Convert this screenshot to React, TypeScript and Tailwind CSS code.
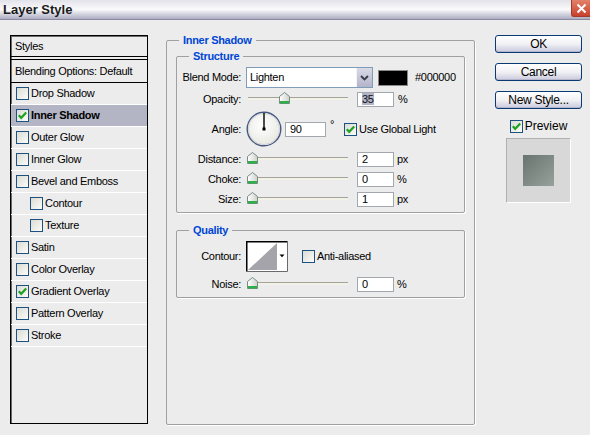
import React from "react";

type Item = { label: string; checked?: boolean; active?: boolean; sub?: boolean };

const items: Item[] = [
  { label: "Drop Shadow" },
  { label: "Inner Shadow", checked: true, active: true },
  { label: "Outer Glow" },
  { label: "Inner Glow" },
  { label: "Bevel and Emboss" },
  { label: "Contour", sub: true },
  { label: "Texture", sub: true },
  { label: "Satin" },
  { label: "Color Overlay" },
  { label: "Gradient Overlay", checked: true },
  { label: "Pattern Overlay" },
  { label: "Stroke" },
];

function Check({ checked = false }: { checked?: boolean }) {
  return (
    <span className="relative inline-block w-[13px] h-[13px] shrink-0 border border-[#1c5180] bg-gradient-to-br from-[#dcdcd5] to-[#fbfbf9]">
      {checked && (
        <svg className="absolute left-0 top-0" width="11" height="11" viewBox="0 0 11 11">
          <path d="M1.8 5.2 L4.2 7.8 L9.2 2.4" fill="none" stroke="#21a121" strokeWidth="2.2" />
        </svg>
      )}
    </span>
  );
}

function Thumb() {
  return (
    <svg width="11" height="12" viewBox="0 0 11 12">
      <defs>
        <linearGradient id="thumbFill" x1="0" y1="0" x2="1" y2="0">
          <stop offset="0" stopColor="#ffffff" />
          <stop offset="1" stopColor="#cdd2cc" />
        </linearGradient>
      </defs>
      <path d="M0.5 4.5 L5.5 0.5 L10.5 4.5 V11.5 H0.5 Z" fill="url(#thumbFill)" stroke="#7b8a82" />
      <rect x="1" y="9" width="9" height="2.5" fill="#2fae4c" />
    </svg>
  );
}

function Slider({ value }: { value: number }) {
  return (
    <div className="relative w-[106px] h-[14px] shrink-0">
      <div className="absolute left-[2px] w-[100px] top-[5px] h-[3px] border-t border-[#a3a398] bg-[#f3f2e8]" />
      <div className="absolute top-[0px]" style={{ left: 1 + value * 0.92 }}>
        <Thumb />
      </div>
    </div>
  );
}

function Field({ children, wide = false }: { children: React.ReactNode; wide?: boolean }) {
  return (
    <div
      className={
        (wide ? "w-[41px]" : "w-[37px]") +
        " h-[15px] shrink-0 border border-[#a3a8ae] bg-white flex items-center pl-[4px] leading-[12px]"
      }
    >
      {children}
    </div>
  );
}

function Label({ children }: { children: React.ReactNode }) {
  return <span className="w-[64px] shrink-0 text-right">{children}</span>;
}

function SliderRow({ label, value, unit }: { label: string; value: number; unit: string }) {
  return (
    <div className="flex items-center h-[20px]">
      <Label>{label}</Label>
      <div className="ml-[5px]">
        <Slider value={0} />
      </div>
      <div className="ml-[5px]">
        <Field>{value}</Field>
      </div>
      <span className="ml-[3px]">{unit}</span>
    </div>
  );
}

function AngleDial() {
  return (
    <svg width="36" height="36" viewBox="0 0 36 36">
      <defs>
        <radialGradient id="dialFill" cx="0.45" cy="0.4" r="0.65">
          <stop offset="0" stopColor="#ffffff" />
          <stop offset="1" stopColor="#e6e6df" />
        </radialGradient>
      </defs>
      <circle cx="18" cy="18" r="16.8" fill="url(#dialFill)" stroke="#45597f" strokeWidth="1.4" />
      <circle cx="18" cy="18" r="15.6" fill="none" stroke="#c9ccd4" strokeWidth="0.8" />
      <line x1="18" y1="18" x2="18" y2="2" stroke="#000" strokeWidth="1.4" />
      <rect x="16.5" y="16.5" width="3" height="3" fill="#000" />
    </svg>
  );
}

function ContourPicker() {
  return (
    <svg width="42" height="31" viewBox="0 0 42 31">
      <rect x="0" y="0" width="42" height="31" fill="#ffffff" />
      <path d="M2 29 L31 2 L31 29 Z" fill="#a4a4aa" />
      <path d="M0.75 30.25 V0.75 H41.25" fill="none" stroke="#000" strokeWidth="1.5" />
      <path d="M41.5 0 V30.5 H0" fill="none" stroke="#6a6a6a" strokeWidth="1" />
      <path d="M33.5 13.5 H38.5 L36 16.2 Z" fill="#000" />
    </svg>
  );
}

function Button({ children }: { children: React.ReactNode }) {
  return (
    <div className="w-[87px] h-[18px] rounded-[3px] border border-[#0a3a73] bg-gradient-to-b from-[#ffffff] via-[#f1f1f5] to-[#c9c9dd] shadow-[inset_0_-1px_0_#b5b5cc] flex items-center justify-center text-[12px] leading-none text-black">
      {children}
    </div>
  );
}

export default function App() {
  return (
    <div className="w-[590px] h-[435px] bg-[#ececec] text-black text-[11px] tracking-[-0.3px] font-['Tahoma','Liberation_Sans',Arial,sans-serif] overflow-hidden select-none">
      {/* title bar */}
      <div className="relative h-[20px] bg-gradient-to-b from-[#e2e2ea] via-[#fafafc] to-[#adadc3] border-b border-[#8a8aa2] flex items-center pl-[3px]">
        <span className="text-[13px] font-bold tracking-normal text-[#1b1b1b] leading-none">Layer Style</span>
        <div className="absolute right-0 top-0 w-[19px] h-[17px] rounded-bl-[3px] bg-gradient-to-b from-[#e2806a] to-[#c8402c] border-l border-b border-[#a33b2a] flex items-center justify-center">
          <svg width="11" height="11" viewBox="0 0 11 11">
            <path d="M1.5 1.5 L9.5 9.5 M9.5 1.5 L1.5 9.5" stroke="#fff" strokeWidth="2" />
          </svg>
        </div>
      </div>

      <div className="flex items-start pl-[10px] pt-[15px]">
        {/* styles list */}
        <div className="w-[138px] h-[389px] border border-black shadow-[inset_1px_1px_0_#6b6b6b] flex flex-col shrink-0">
          <div className="h-[21px] flex items-center pl-[4px] border-b border-black">Styles</div>
          <div className="h-[2px]" />
          <div className="h-[24px] flex items-center pl-[4px] border-t border-b border-black">
            Blending Options: Default
          </div>
          {items.map((it) => (
            <div
              key={it.label}
              className={
                "h-[22px] flex items-center gap-[2px] border-b border-white " +
                (it.sub ? "pl-[19px] " : "pl-[5px] ") +
                (it.active ? "bg-[#b3b4c4] font-bold" : "")
              }
            >
              <Check checked={it.checked} />
              <span>{it.label}</span>
            </div>
          ))}
        </div>

        {/* settings */}
        <fieldset className="ml-[18px] -mt-[2px] w-[309px] h-[392px] shrink-0 border border-[#a0a0a0] shadow-[1px_1px_0_#fff] px-[9px] rounded-[2px]">
          <legend className="ml-[3px] px-[4px] leading-[14px] font-bold text-[#0046d5]">Inner Shadow</legend>

          <fieldset className="mt-[2px] border border-[#a0a0a0] shadow-[1px_1px_0_#fff] pb-[3px] rounded-[2px]">
            <legend className="ml-[12px] px-[4px] leading-[14px] font-bold text-[#0046d5]">Structure</legend>

            <div className="flex items-center h-[21px] mt-[4px]">
              <Label>Blend Mode:</Label>
              <div className="ml-[5px] w-[127px] h-[21px] border border-[#7f9db9] bg-white flex items-center shrink-0">
                <span className="flex-1 pl-[3px]">Lighten</span>
                <div className="w-[16px] h-[19px] bg-gradient-to-b from-[#d9d9e6] to-[#b3b4cb] border-l border-[#f2f2f8] flex items-center justify-center">
                  <svg width="9" height="6" viewBox="0 0 9 6">
                    <path d="M1 1 L4.5 4.5 L8 1" fill="none" stroke="#3a3a48" strokeWidth="1.8" />
                  </svg>
                </div>
              </div>
              <div className="ml-[5px] w-[30px] h-[16px] bg-black border border-[#8a8a8a] shrink-0" />
              <span className="ml-[7px]">#000000</span>
            </div>

            <div className="flex items-center h-[16px] mt-[3px]">
              <Label>Opacity:</Label>
              <div className="ml-[5px]">
                <Slider value={35} />
              </div>
              <div className="ml-[5px]">
                <Field>
                  <span className="bg-[#b1b3c6] text-[#111]">35</span>
                </Field>
              </div>
              <span className="ml-[4px]">%</span>
            </div>

            <div className="flex items-center h-[36px] mt-[4px]">
              <Label>Angle:</Label>
              <div className="ml-[5px] shrink-0">
                <AngleDial />
              </div>
              <div className="ml-[3px]">
                <Field wide>90</Field>
              </div>
              <span className="ml-[4px] self-start mt-[8px] leading-none">°</span>
              <div className="ml-[10px] flex items-center gap-[2px]">
                <Check checked />
                <span>Use Global Light</span>
              </div>
            </div>

            <div className="mt-[2px]">
              <SliderRow label="Distance:" value={2} unit="px" />
              <SliderRow label="Choke:" value={0} unit="%" />
              <SliderRow label="Size:" value={1} unit="px" />
            </div>
          </fieldset>

          <fieldset className="mt-[10px] border border-[#a0a0a0] shadow-[1px_1px_0_#fff] pb-[3px] rounded-[2px]">
            <legend className="ml-[12px] px-[4px] leading-[14px] font-bold text-[#0046d5]">Quality</legend>
            <div className="flex items-center h-[31px] mt-[4px]">
              <Label>Contour:</Label>
              <div className="ml-[5px] shrink-0">
                <ContourPicker />
              </div>
              <div className="ml-[14px] flex items-center gap-[2px]">
                <Check />
                <span>Anti-aliased</span>
              </div>
            </div>
            <div className="mt-[2px]">
              <SliderRow label="Noise:" value={0} unit="%" />
            </div>
          </fieldset>
        </fieldset>

        {/* actions */}
        <div className="ml-[20px] w-[87px] flex flex-col items-center shrink-0">
          <Button>OK</Button>
          <div className="mt-[10px]">
            <Button>Cancel</Button>
          </div>
          <div className="mt-[10px]">
            <Button>New Style...</Button>
          </div>
          <div className="mt-[8px] flex items-center gap-[2px] text-[12px] tracking-normal">
            <Check checked />
            <span>Preview</span>
          </div>
          <div className="mt-[3px] w-[65px] h-[65px] border border-[#b0b0b0] border-r-white border-b-white bg-[#d8d8d8] flex items-center justify-center">
            <div className="w-[31px] h-[31px] bg-gradient-to-br from-[#69736f] to-[#98a29d]" />
          </div>
        </div>
      </div>
    </div>
  );
}
